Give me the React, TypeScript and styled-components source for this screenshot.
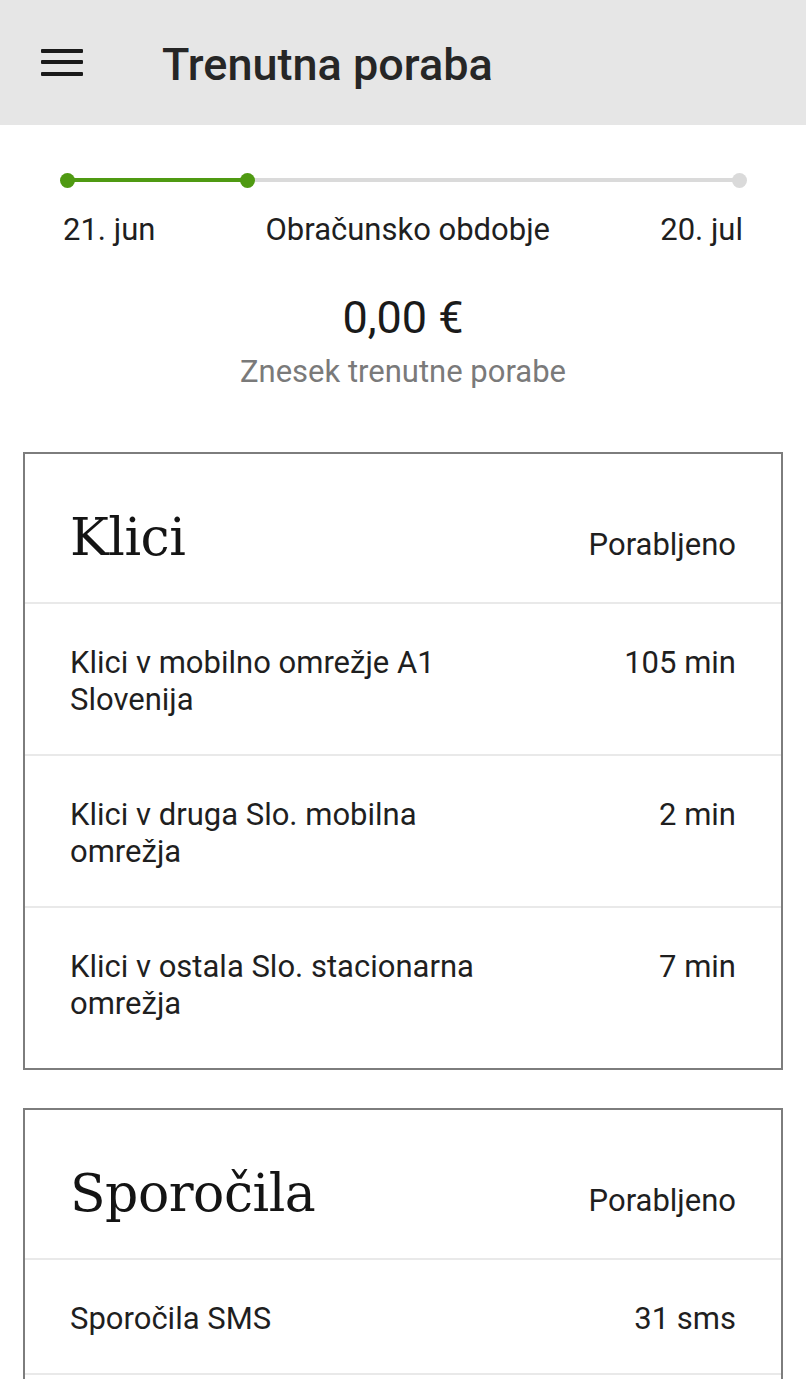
import React from "react";
import styled, { createGlobalStyle } from "styled-components";

const Global = createGlobalStyle`
  html, body { margin: 0; padding: 0; background: #ffffff; }
  body { font-family: Roboto, "Noto Sans", Arial, sans-serif; color: #212121; }
  * { box-sizing: border-box; }
`;

const Page = styled.div`
  width: 806px;
  height: 1379px;
  background: #fff;
  overflow: hidden;
`;

const Header = styled.header`
  height: 125px;
  background: #e6e6e6;
  display: flex;
  align-items: center;
  padding-left: 41px;
  gap: 79px;
`;

const Burger = styled.div`
  width: 42px;
  height: 27px;
  display: flex;
  flex-direction: column;
  justify-content: space-between;
  margin-top: -1px;
  span {
    display: block;
    height: 4px;
    background: #1a1a1a;
    border-radius: 1px;
  }
`;

const Title = styled.h1`
  margin: 0;
  font-size: 45px;
  line-height: 52px;
  font-weight: 500;
  color: #262626;
  padding-top: 4px;
`;

const Period = styled.section`
  padding: 48px 63px 0;
`;

const Track = styled.div`
  position: relative;
  height: 14px;
  margin: 0 4px;
`;

const TrackLine = styled.div`
  position: absolute;
  left: 0;
  right: 0;
  top: 5px;
  height: 4px;
  background: #dadada;
  border-radius: 2px;
`;

const TrackFill = styled.div`
  position: absolute;
  left: 0;
  top: 5px;
  height: 4px;
  background: #4f9a12;
`;

const Dot = styled.div<{ $active?: boolean }>`
  position: absolute;
  top: 0;
  width: 15px;
  height: 15px;
  margin-left: -7.5px;
  border-radius: 50%;
  background: ${(p) => (p.$active ? "#4f9a12" : "#dadada")};
`;

const Labels = styled.div`
  display: flex;
  justify-content: space-between;
  margin-top: 25px;
  font-size: 31px;
  line-height: 36px;
  color: #1f1f1f;
`;

const Amount = styled.div`
  text-align: center;
  margin-top: 44px;
  font-size: 45px;
  line-height: 52px;
  color: #1a1a1a;
`;

const AmountLabel = styled.div`
  text-align: center;
  margin-top: 10px;
  font-size: 31px;
  line-height: 36px;
  color: #7a7a7a;
`;

const Cards = styled.div`
  display: flex;
  flex-direction: column;
  gap: 38px;
  padding: 62px 23px 0;
`;

const Card = styled.section<{ $cut?: boolean }>`
  border: 2px solid #7d7d7d;
  background: #fff;
  padding-bottom: ${(p) => (p.$cut ? "60px" : "0")};
`;

const CardHead = styled.div`
  display: flex;
  align-items: baseline;
  justify-content: space-between;
  padding: 53px 45px 35px 45px;
  border-bottom: 2px solid #e9e9e9;
`;

const CardTitle = styled.h2`
  margin: 0;
  font-family: "DejaVu Serif", "Liberation Serif", serif;
  font-weight: 400;
  font-size: 52px;
  line-height: 60px;
  color: #141414;
  letter-spacing: -0.5px;
`;

const HeadNote = styled.div`
  font-size: 31px;
  color: #1f1f1f;
`;

const Row = styled.div<{ $last?: boolean }>`
  display: flex;
  justify-content: space-between;
  align-items: flex-start;
  padding: 40px 45px ${(p) => (p.$last ? "46px" : "36px")} 45px;
  border-bottom: ${(p) => (p.$last ? "none" : "2px solid #e9e9e9")};
  font-size: 31px;
  line-height: 37px;
  color: #1f1f1f;
`;

const RowLabel = styled.div`
  width: 440px;
`;

const RowValue = styled.div`
  text-align: right;
  white-space: nowrap;
`;

type Item = { label: string; value: string };

const calls: Item[] = [
  { label: "Klici v mobilno omrežje A1 Slovenija", value: "105 min" },
  { label: "Klici v druga Slo. mobilna omrežja", value: "2 min" },
  { label: "Klici v ostala Slo. stacionarna omrežja", value: "7 min" },
];

const messages: Item[] = [{ label: "Sporočila SMS", value: "31 sms" }];

function UsageCard({ title, items, cut = false }: { title: string; items: Item[]; cut?: boolean }) {
  return (
    <Card $cut={cut}>
      <CardHead>
        <CardTitle>{title}</CardTitle>
        <HeadNote>Porabljeno</HeadNote>
      </CardHead>
      {items.map((it, i) => (
        <Row key={it.label} $last={!cut && i === items.length - 1}>
          <RowLabel>{it.label}</RowLabel>
          <RowValue>{it.value}</RowValue>
        </Row>
      ))}
    </Card>
  );
}

export default function App() {
  const progress = 26.8;
  return (
    <Page>
      <Global />
      <Header>
        <Burger>
          <span />
          <span />
          <span />
        </Burger>
        <Title>Trenutna poraba</Title>
      </Header>
      <Period>
        <Track>
          <TrackLine />
          <TrackFill style={{ width: `${progress}%` }} />
          <Dot $active style={{ left: "0%" }} />
          <Dot $active style={{ left: `${progress}%` }} />
          <Dot style={{ left: "100%" }} />
        </Track>
        <Labels>
          <span>21. jun</span>
          <span>Obračunsko obdobje</span>
          <span>20. jul</span>
        </Labels>
      </Period>
      <Amount>0,00 €</Amount>
      <AmountLabel>Znesek trenutne porabe</AmountLabel>
      <Cards>
        <UsageCard title="Klici" items={calls} />
        <UsageCard title="Sporočila" items={messages} cut />
      </Cards>
    </Page>
  );
}
